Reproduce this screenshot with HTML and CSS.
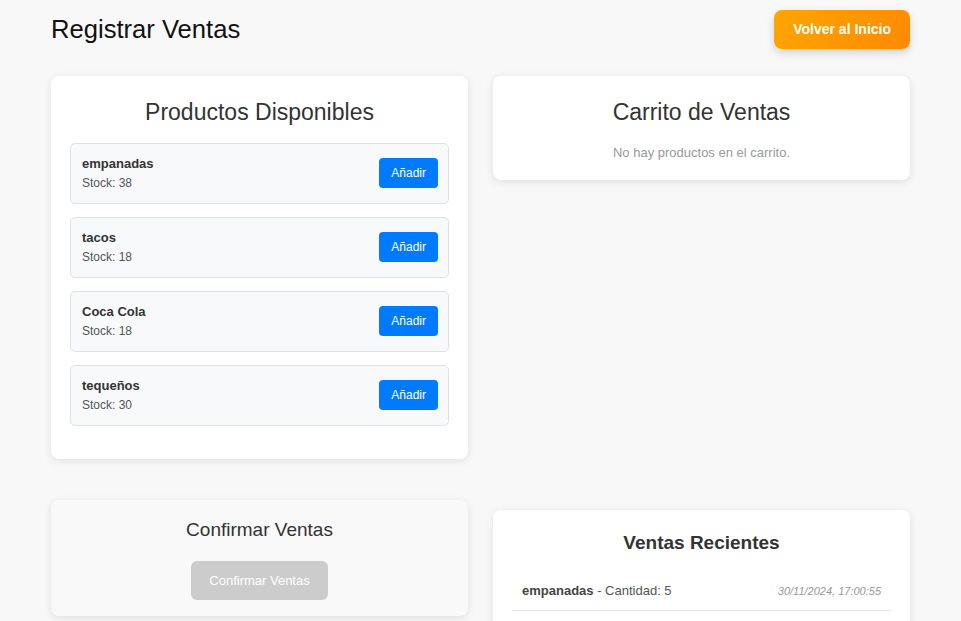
FILE: index.html
```html
<!DOCTYPE html>
<html lang="es">
<head>
<meta charset="utf-8">
<title>Registrar Ventas</title>
<link rel="stylesheet" href="styles.css">
</head>
<body>
<div class="page">
  <header class="header">
    <h1 class="title">Registrar Ventas</h1>
    <button class="btn-home">Volver al Inicio</button>
  </header>

  <div class="grid">
    <section class="card">
      <h2 class="card-title">Productos Disponibles</h2>
      <div class="product">
        <div class="info">
          <div class="name">empanadas</div>
          <div class="stock">Stock: 38</div>
        </div>
        <button class="btn-add">Añadir</button>
      </div>
      <div class="product">
        <div class="info">
          <div class="name">tacos</div>
          <div class="stock">Stock: 18</div>
        </div>
        <button class="btn-add">Añadir</button>
      </div>
      <div class="product">
        <div class="info">
          <div class="name">Coca Cola</div>
          <div class="stock">Stock: 18</div>
        </div>
        <button class="btn-add">Añadir</button>
      </div>
      <div class="product">
        <div class="info">
          <div class="name">tequeños</div>
          <div class="stock">Stock: 30</div>
        </div>
        <button class="btn-add">Añadir</button>
      </div>
    </section>

    <section class="card card-top">
      <h2 class="card-title">Carrito de Ventas</h2>
      <p class="empty">No hay productos en el carrito.</p>
    </section>

    <section class="card card-confirm">
      <h3 class="confirm-title">Confirmar Ventas</h3>
      <button class="btn-confirm" disabled>Confirmar Ventas</button>
    </section>

    <section class="card card-recent">
      <h3 class="recent-title">Ventas Recientes</h3>
      <div class="sale">
        <span class="sale-text"><strong>empanadas</strong> - Cantidad: 5</span>
        <span class="sale-date">30/11/2024, 17:00:55</span>
      </div>
    </section>
  </div>
</div>
</body>
</html>
```

FILE: styles.css
```css
* { box-sizing: border-box; }

html, body {
  margin: 0;
  padding: 0;
  background: #f8f8f8;
  font-family: "Liberation Sans", Arial, sans-serif;
  color: #333;
}

.page {
  width: 859px;
  margin: 0 auto;
  padding-top: 10px;
}

.header {
  display: flex;
  justify-content: space-between;
  align-items: center;
  margin-bottom: 27px;
}

.title {
  margin: 0;
  font-size: 25.6px;
  font-weight: normal;
  color: #111;
}

.btn-home {
  font-family: "Liberation Sans", Arial, sans-serif;
  font-size: 14px;
  font-weight: bold;
  line-height: 15px;
  color: #fff;
  border: none;
  border-radius: 8px;
  padding: 12px 19px;
  background: linear-gradient(120deg, #ffa500, #ff8a00);
  box-shadow: 0 4px 8px rgba(0, 0, 0, 0.15);
}

.grid {
  display: grid;
  grid-template-columns: 1fr 1fr;
  column-gap: 25px;
  row-gap: 41px;
  align-items: start;
}

.card {
  background: #fff;
  border-radius: 8px;
  padding: 19px 19px 20px;
  box-shadow: 0 2px 8px rgba(0, 0, 0, 0.1);
}

.card-title {
  margin: 4px 0 17px;
  text-align: center;
  font-size: 23px;
  font-weight: normal;
  color: #333;
}

.product {
  display: flex;
  justify-content: space-between;
  align-items: center;
  background: #f8f9fa;
  border: 1px solid #dee2e6;
  border-radius: 5px;
  padding: 12px 10px 13px 11px;
  margin-bottom: 13px;
}

.name {
  font-size: 13px;
  font-weight: bold;
  line-height: 15px;
  color: #333;
  margin-bottom: 5px;
}

.stock {
  font-size: 12px;
  line-height: 14px;
  color: #555;
}

.btn-add {
  font-family: "Liberation Sans", Arial, sans-serif;
  font-size: 12px;
  line-height: 14px;
  color: #fff;
  background: #007bff;
  border: none;
  border-radius: 4px;
  padding: 8px 12px;
}

.empty {
  margin: 19px 0 0;
  text-align: center;
  font-size: 13px;
  line-height: 15px;
  color: #999;
}

.card-confirm {
  background: #f9f9f9;
  text-align: center;
  padding: 19px 19px 16px;
}

.confirm-title {
  margin: 0 0 21px;
  font-size: 19px;
  font-weight: normal;
  line-height: 21px;
  color: #333;
}

.btn-confirm {
  font-family: "Liberation Sans", Arial, sans-serif;
  font-size: 13px;
  line-height: 15px;
  color: #fff;
  background: #ccc;
  border: none;
  border-radius: 6px;
  padding: 12px 18px;
}

.card-recent {
  margin-top: 10px;
}

.recent-title {
  margin: 3px 0 17px;
  text-align: center;
  font-size: 19px;
  font-weight: bold;
  line-height: 21px;
  color: #333;
}

.sale {
  display: flex;
  justify-content: space-between;
  align-items: center;
  padding: 13px 10px 12px;
  border-bottom: 1px solid #e2e4e8;
}

.sale-text {
  font-size: 13px;
  line-height: 15px;
  color: #555;
}

.sale-text strong {
  color: #444;
}

.sale-date {
  font-size: 11px;
  font-style: italic;
  color: #999;
}
```
